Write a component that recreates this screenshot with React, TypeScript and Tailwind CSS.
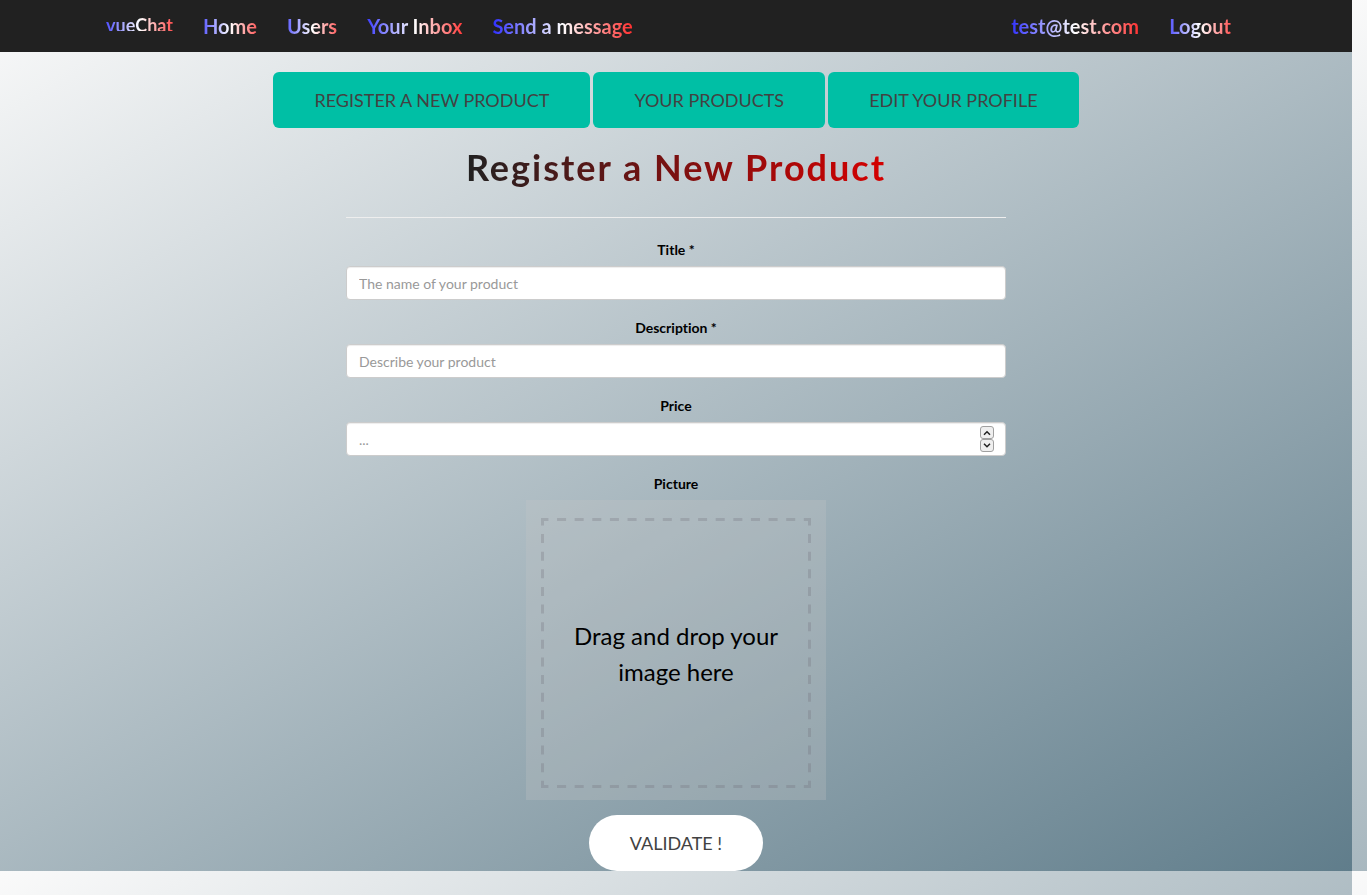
import { useId, useRef, type ReactNode } from "react";

const navLinkClass =
  "block bg-[linear-gradient(to_right,#0000ff,#ffffff,#ff0000)] bg-clip-text px-[15px] font-bold leading-5 text-transparent";
const tabClass =
  "cursor-pointer rounded-md bg-[#00bfa5] px-[41px] py-[14px] text-lg leading-7 text-[#424242] uppercase";
const labelClass = "block text-sm leading-5 font-bold text-black";
const inputClass =
  "h-[34px] w-full rounded border border-[#cccccc] bg-white px-3 text-sm text-[#555555] shadow-[inset_0_1px_1px_rgba(0,0,0,0.075)] outline-none placeholder:text-[#999999]";
const stepperClass =
  "flex h-[13px] w-[14px] items-center justify-center rounded-[3px] border border-[#a0a0a0] bg-[#efefef]";

function NavLink({ children }: { children: ReactNode }) {
  return (
    <li>
      <a href="#" className={`${navLinkClass} py-4 text-xl/5`}>
        {children}
      </a>
    </li>
  );
}

function TextField({ label, placeholder }: { label: string; placeholder: string }) {
  const id = useId();
  return (
    <div className="flex flex-col gap-[6px]">
      <label htmlFor={id} className={labelClass}>
        {label}
      </label>
      <input id={id} type="text" placeholder={placeholder} className={inputClass} />
    </div>
  );
}

function Chevron({ d }: { d: string }) {
  return (
    <svg viewBox="0 0 8 6" className="h-[6px] w-2" fill="none" stroke="#222222" strokeWidth="1.5">
      <path d={d} />
    </svg>
  );
}

function PriceField() {
  const id = useId();
  const input = useRef<HTMLInputElement>(null);
  return (
    <div className="flex flex-col gap-[6px]">
      <label htmlFor={id} className={labelClass}>
        Price
      </label>
      <div className="relative">
        <input
          ref={input}
          id={id}
          type="number"
          placeholder="..."
          className={`${inputClass} block [appearance:textfield] [&::-webkit-inner-spin-button]:appearance-none`}
        />
        <div className="absolute inset-y-0 right-3 flex flex-col justify-center">
          <button
            type="button"
            aria-label="Increase price"
            className={stepperClass}
            onClick={() => input.current?.stepUp()}
          >
            <Chevron d="M1 4.8 4 1.8 7 4.8" />
          </button>
          <button
            type="button"
            aria-label="Decrease price"
            className={stepperClass}
            onClick={() => input.current?.stepDown()}
          >
            <Chevron d="M1 0.8 4 3.8 7 0.8" />
          </button>
        </div>
      </div>
    </div>
  );
}

function PictureField() {
  const id = useId();
  return (
    <div className="flex flex-col items-center gap-[6px]">
      <label htmlFor={id} className={labelClass}>
        Picture
      </label>
      <label
        htmlFor={id}
        className="relative flex size-[300px] cursor-pointer items-center justify-center bg-[rgba(200,200,200,0.25)] px-10 pt-2 text-center text-2xl leading-9 text-black"
      >
        <svg
          viewBox="0 0 300 300"
          className="absolute inset-0 size-full"
          fill="none"
          stroke="rgba(110,105,115,0.26)"
          strokeWidth="3"
          strokeDasharray="9 8.63"
          aria-hidden="true"
        >
          <path d="M15 19.5H285" strokeDashoffset="1.6" />
          <path d="M15 286.5H285" strokeDashoffset="1.6" />
          <path d="M16.5 21V285" strokeDashoffset="4.6" />
          <path d="M283.5 21V285" strokeDashoffset="4.6" />
        </svg>
        Drag and drop your image here
        <input id={id} type="file" accept="image/*" className="sr-only" />
      </label>
    </div>
  );
}

export default function App() {
  return (
    <div className="bg-[linear-gradient(150deg,#fafafa,#607d8b)] bg-origin-content pr-[15px] pb-6 font-[Lato,sans-serif] [font-variant-ligatures:none]">
      <nav className="bg-[#212121]">
        <div className="mx-auto flex h-[52px] max-w-[1170px] items-start pr-[15px]">
          <a href="#" className={`${navLinkClass} h-[31px] pt-[15px] text-lg/5`}>
            vueChat
          </a>
          <ul className="flex">
            <NavLink>Home</NavLink>
            <NavLink>Users</NavLink>
            <NavLink>Your Inbox</NavLink>
            <NavLink>Send a message</NavLink>
          </ul>
          <ul className="ml-auto flex">
            <NavLink>test@test.com</NavLink>
            <NavLink>Logout</NavLink>
          </ul>
        </div>
      </nav>

      <main className="flex flex-col items-center">
        <div className="mt-5 flex flex-wrap justify-center gap-[3px]">
          <button type="button" className={tabClass}>
            Register a new product
          </button>
          <button type="button" className={tabClass}>
            Your products
          </button>
          <button type="button" className={tabClass}>
            Edit your profile
          </button>
        </div>

        <h1 className="mt-4 bg-[linear-gradient(to_right,#212121,#d50000)] bg-clip-text pt-1 pb-2 text-4xl leading-[38px] font-bold tracking-[2px] text-transparent">
          Register a New Product
        </h1>

        <form className="flex w-1/2 flex-col px-2 text-center" onSubmit={(e) => e.preventDefault()}>
          <hr className="mt-[23px] mb-[22px] border-[#eeeeee]" />
          <div className="flex flex-col gap-[18px]">
            <TextField label="Title *" placeholder="The name of your product" />
            <TextField label="Description *" placeholder="Describe your product" />
            <PriceField />
            <PictureField />
          </div>
          <button
            type="submit"
            className="mt-[15px] cursor-pointer self-center rounded-full bg-white px-[41px] py-[14px] text-lg leading-7 text-[#424242] uppercase"
          >
            Validate !
          </button>
        </form>
      </main>
    </div>
  );
}
